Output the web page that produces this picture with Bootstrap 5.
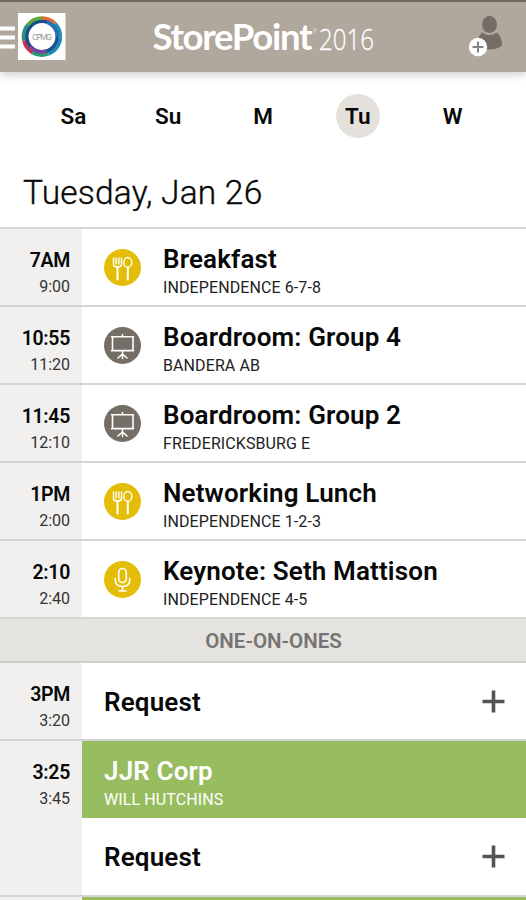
<!DOCTYPE html>
<html lang="en">
<head>
<meta charset="utf-8">
<meta name="viewport" content="width=device-width, initial-scale=1">
<title>StorePoint 2016</title>
<link rel="stylesheet" href="https://cdn.jsdelivr.net/npm/bootstrap@5.3.0/dist/css/bootstrap.min.css">
<style>
body{font-family:Roboto,"Liberation Sans",sans-serif;color:#080808;height:900px;background:#fff}
.topbar{height:72px;background:#b0a79d;border-top:2px solid #71675e;box-shadow:0 2px 9px rgba(0,0,0,.22)}
.days{height:87px;padding:0 26px}
.day{width:95px;font-size:22.5px;font-weight:600;line-height:44px}
.day.active span{background:#e4e1dd;border-radius:50%}
.day span{display:block;width:44px;height:44px;text-align:center;white-space:nowrap}
.date-head{height:70px;padding:14px 23px 0;border-bottom:2px solid #d5d5d5;font-size:33.5px;line-height:40px;font-weight:300;letter-spacing:.2px;-webkit-text-stroke:.35px #080808}
.slot{height:78px;border-bottom:2px solid #d5d5d4}
.slot-tall{height:156px}
.slot-cut{height:3px;border:0}
.when{width:82px;background:#f1f0ee;padding:20px 12px 0 0;text-align:right;flex:none}
.slot-cut .when{padding:0}
.start{font-size:19.5px;line-height:24px;font-weight:600;letter-spacing:-.3px}
.end{font-size:16px;line-height:20px;margin-top:4px;color:#333}
.what{padding:15px 0 0 22px}
.kind{width:37px;height:37px;margin:5px 22px 0 0;flex:none}
.name{font-size:26px;line-height:30px;font-weight:600;white-space:nowrap;letter-spacing:.15px}
.place{font-size:16px;line-height:20px;margin-top:4px;white-space:nowrap;color:#222;letter-spacing:.1px}
.divider{height:44px;background:#e4e3e0;border-bottom:2px solid #cfcfcd;color:#757472;font-size:20.5px;font-weight:600;padding:2px 0 0 21px}
.ask{height:76px;padding:1px 21px 0 22px}
.booked{height:77px;background:#98bd60;color:#fff}
.booked .place{color:#fff}
</style>
<script src="https://cdn.jsdelivr.net/npm/bootstrap@5.3.0/dist/js/bootstrap.bundle.min.js"></script>
</head>
<body class="overflow-hidden">
<svg class="d-none">
<symbol id="food" viewBox="0 0 37 37"><circle cx="18.5" cy="18.5" r="18.5" fill="#e4bd08"/><g fill="none" stroke="#fff" stroke-width="1.4" stroke-linecap="round" stroke-linejoin="round"><path d="M9.500 9v6.500q0 2.500 3.500 2.500h1q3.500 0 3.500-2.500V9M12.200 9v6M14.900 9v6"/><path d="M13.500 18v12.500M23.800 18.500v12" stroke-width="2"/><ellipse cx="23.800" cy="13.400" rx="4" ry="4.900"/></g></symbol>
<symbol id="board" viewBox="0 0 37 37"><circle cx="18.500" cy="18.500" r="18.500" fill="#746e67"/><g fill="none" stroke="#fff" stroke-width="1.600" stroke-linecap="round"><path d="M7.500 9.700h22M8.500 10v13.500h20.500v-13.500M7.500 23.700h22M18.500 7.500v2M18.500 24v7.500M18.500 27l-4.500 4M18.500 27l4.500 4"/></g></symbol>
<symbol id="mic" viewBox="0 0 37 37"><circle cx="18.500" cy="18.500" r="18.500" fill="#e4bd08"/><g fill="none" stroke="#fff" stroke-width="1.600" stroke-linecap="round"><rect x="14.700" y="7.500" width="7.600" height="14" rx="3.800"/><path d="M11.300 17.500v1.500q0 6.500 7.200 6.500t7.200-6.500v-1.500M18.500 25.500v4.500M15 30h7"/></g></symbol>
<symbol id="plus" viewBox="0 0 23 23"><path d="M11.500.5v22M.5 11.500h22" stroke="#555452" stroke-width="3.600"/></symbol>
</svg>

<header class="topbar d-flex position-relative">
<svg width="526" height="70" viewBox="0 2 526 70" role="img" aria-label="StorePoint 2016">
<path d="M0 28.500h15M0 37.500h15M0 46.500h15" stroke="#fff" stroke-width="4"/>
<rect x="18" y="13" width="47.500" height="47" fill="#fff"/>
<g fill="none" stroke-width="3.600"><circle cx="42" cy="36.500" r="15.500" stroke="#184e8c" stroke-width="4"/>
<path d="M42 18a18.500 18.500 0 0 1 13 5.400" stroke="#e36c35"/><path d="M55 23.400a18.500 18.500 0 0 1 5.400 14" stroke="#238fb5"/><path d="M60.400 37.400a18.500 18.500 0 0 1-12 16.500" stroke="#188bb9"/><path d="M48.400 53.900a18.500 18.500 0 0 1-16-1.300" stroke="#2a9b70"/><path d="M32.400 52.600a18.500 18.500 0 0 1-8.500-12.100" stroke="#cc304d"/><path d="M23.900 40.500a18.500 18.500 0 0 1 4.100-16" stroke="#318f79"/><path d="M28 24.500a18.500 18.500 0 0 1 14-6.500" stroke="#61a93a"/><path d="M30 46.500a15.500 15.500 0 0 0 17 4.500" stroke="#71479c"/><path d="M47 22a15.500 15.500 0 0 1 10.500 15" stroke="#2375b2"/></g>
<text x="32" y="39.500" font-family="Inter,sans-serif" font-size="8" fill="#999" textLength="20">CPMG</text>
<text x="152.500" y="50" font-family="Lato,sans-serif" font-size="36.500" font-weight="700" fill="#fff" textLength="160">StorePoint</text>
<text x="313" y="33" font-family="Roboto,sans-serif" font-size="5" fill="#e5dfd8">®</text>
<text x="319" y="50" font-family="'Open Sans',sans-serif" font-size="29.500" font-weight="300" fill="#fff" stroke="#fff" stroke-width=".3" textLength="55" lengthAdjust="spacingAndGlyphs">2016</text>
<g fill="#756e66"><ellipse cx="489.500" cy="24.500" rx="7.500" ry="8.500"/><path d="M482 32.500q7.500 5 15 0 5 4 5 13-5 4-12.500 4-8 0-12-4 0-9 4.500-13z"/></g>
<circle cx="478" cy="47" r="9.200" fill="#fff"/><path d="M478 41.500v11M472.500 47h11" stroke="#8b8580" stroke-width="2"/>
</svg>
</header>

<nav class="days d-flex align-items-center">
<div class="day d-flex justify-content-center"><span>Sa</span></div>
<div class="day d-flex justify-content-center"><span>Su</span></div>
<div class="day d-flex justify-content-center"><span>M</span></div>
<div class="day active d-flex justify-content-center"><span>Tu</span></div>
<div class="day d-flex justify-content-center"><span>W</span></div>
</nav>
<h1 class="date-head mb-0">Tuesday, Jan 26</h1>

<main>
<div class="slot d-flex"><div class="when"><div class="start">7AM</div><div class="end">9:00</div></div><div class="what d-flex"><svg class="kind"><use href="#food"/></svg><div><div class="name">Breakfast</div><div class="place">INDEPENDENCE 6-7-8</div></div></div></div>
<div class="slot d-flex"><div class="when"><div class="start">10:55</div><div class="end">11:20</div></div><div class="what d-flex"><svg class="kind"><use href="#board"/></svg><div><div class="name">Boardroom: Group 4</div><div class="place">BANDERA AB</div></div></div></div>
<div class="slot d-flex"><div class="when"><div class="start">11:45</div><div class="end">12:10</div></div><div class="what d-flex"><svg class="kind"><use href="#board"/></svg><div><div class="name">Boardroom: Group 2</div><div class="place">FREDERICKSBURG E</div></div></div></div>
<div class="slot d-flex"><div class="when"><div class="start">1PM</div><div class="end">2:00</div></div><div class="what d-flex"><svg class="kind"><use href="#food"/></svg><div><div class="name">Networking Lunch</div><div class="place">INDEPENDENCE 1-2-3</div></div></div></div>
<div class="slot d-flex"><div class="when"><div class="start">2:10</div><div class="end">2:40</div></div><div class="what d-flex"><svg class="kind"><use href="#mic"/></svg><div><div class="name">Keynote: Seth Mattison</div><div class="place">INDEPENDENCE 4-5</div></div></div></div>
<div class="divider d-flex align-items-center justify-content-center"><span>ONE-ON-ONES</span></div>
<div class="slot d-flex"><div class="when"><div class="start">3PM</div><div class="end">3:20</div></div><div class="ask flex-grow-1 d-flex align-items-center justify-content-between"><div class="name">Request</div><svg width="23" height="23"><use href="#plus"/></svg></div></div>
<div class="slot slot-tall d-flex"><div class="when"><div class="start">3:25</div><div class="end">3:45</div></div><div class="flex-grow-1"><div class="booked what"><div class="name">JJR Corp</div><div class="place">WILL HUTCHINS</div></div><div class="ask d-flex align-items-center justify-content-between"><div class="name">Request</div><svg width="23" height="23"><use href="#plus"/></svg></div></div></div>
<div class="slot slot-cut d-flex"><div class="when"></div><div class="booked h-100 flex-grow-1"></div></div>
</main>
</body>
</html>
